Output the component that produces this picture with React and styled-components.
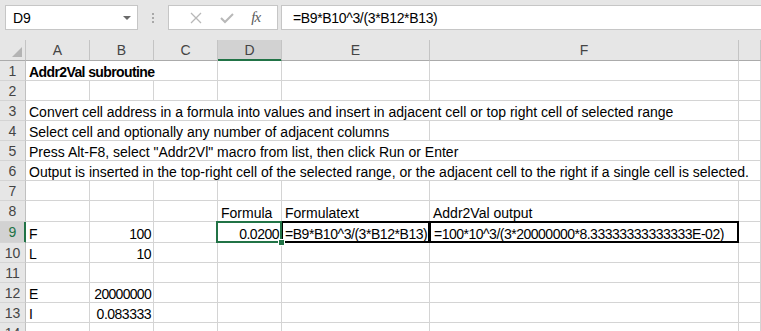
import React from 'react';
import styled, { createGlobalStyle } from 'styled-components';

const GREEN = '#217346';
const GRID = '#d4d4d4';
const TEMPLATE = '26px 64px 64px 64px 64px 148px 309px 1fr';

const GlobalStyle = createGlobalStyle`
  html, body { margin: 0; padding: 0; background: #fff; }
  body {
    font-family: "Liberation Sans", Arial, sans-serif;
    font-size: 14px;
    color: #000;
    overflow: hidden;
  }
  * { box-sizing: border-box; }
`;

const Page = styled.div`
  width: 761px;
  height: 331px;
  overflow: hidden;
`;

/* formula bar */
const TopBar = styled.div`
  height: 40px;
  background: #e6e6e6;
  display: flex;
  align-items: flex-start;
  padding: 5px 0 0 5px;
`;

const BarBox = styled.div`
  height: 25px;
  background: #fff;
  border: 1px solid #c6c6c6;
  display: flex;
  align-items: flex-end;
  padding-bottom: 3px;
  line-height: 16px;
  white-space: nowrap;
`;

const NameBox = styled(BarBox)`
  width: 133px;
  padding-left: 7px;
  justify-content: space-between;
  padding-right: 6px;
`;

const Arrow = styled.span`
  width: 0;
  height: 0;
  border-left: 4px solid transparent;
  border-right: 4px solid transparent;
  border-top: 4px solid #6a6a6a;
  margin-bottom: 6px;
`;

const Grip = styled.div`
  width: 30px;
  height: 25px;
  display: flex;
  flex-direction: column;
  align-items: center;
  justify-content: center;
  gap: 2px;
  span {
    width: 2px;
    height: 2px;
    background: #a8a8a8;
  }
`;

const FuncBox = styled(BarBox)`
  width: 110px;
  align-items: center;
  justify-content: space-around;
  padding: 0 8px 0 12px;
`;

const Fx = styled.span`
  font-family: "Liberation Serif", "Times New Roman", serif;
  font-style: italic;
  font-size: 15px;
  color: #5a5a5a;
  letter-spacing: -1px;
  margin-top: -2px;
`;

const FormulaBox = styled(BarBox)`
  flex: 1;
  margin-left: 3px;
  border-right: none;
  padding-left: 11px;
  letter-spacing: -0.35px;
`;

/* sheet */
const Row = styled.div`
  display: grid;
  grid-template-columns: ${TEMPLATE};
  height: ${p => p.$h}px;
`;

const ColHead = styled.div`
  background: ${p => (p.$active ? '#d2d2d2' : '#e6e6e6')};
  border-right: 1px solid #c4c4c4;
  border-bottom: 1px solid ${p => (p.$active ? GREEN : '#ababab')};
  box-shadow: ${p => (p.$active ? `inset 0 -1px 0 ${GREEN}` : 'none')};
  color: #444;
  display: flex;
  align-items: center;
  justify-content: center;
  line-height: 16px;
  position: relative;
`;

const Corner = styled(ColHead)`
  &::after {
    content: '';
    position: absolute;
    right: 3px;
    bottom: 3px;
    width: 0;
    height: 0;
    border-left: 10px solid transparent;
    border-bottom: 10px solid #b4b4b4;
  }
`;

const RowHead = styled.div`
  background: ${p => (p.$active ? '#d2d2d2' : '#e6e6e6')};
  border-right: 1px solid ${p => (p.$active ? GREEN : '#c0c0c0')};
  border-bottom: 1px solid #d4d4d4;
  box-shadow: ${p => (p.$active ? `inset -1px 0 0 ${GREEN}` : 'none')};
  color: ${p => (p.$active ? GREEN : '#444')};
  display: flex;
  align-items: center;
  justify-content: center;
  line-height: 16px;
`;

const Cell = styled.div`
  grid-column: span ${p => p.$span || 1};
  border-right: 1px solid ${GRID};
  border-bottom: 1px solid ${GRID};
  display: flex;
  align-items: flex-end;
  min-width: 0;
  position: relative;
  line-height: 16px;

  ${p =>
    p.$boxed &&
    `&::after {
      content: '';
      position: absolute;
      inset: -1px;
      border: 2px solid #000;
      z-index: 1;
    }`}

  ${p =>
    p.$selected &&
    `&::before {
      content: '';
      position: absolute;
      top: -1px;
      left: -2px;
      right: -1px;
      bottom: -1px;
      border: 2px solid ${GREEN};
      z-index: 2;
    }`}
`;

const CellText = styled.span`
  flex: 1;
  min-width: 0;
  overflow: hidden;
  white-space: nowrap;
  text-align: ${p => (p.$right ? 'right' : 'left')};
  padding: 0 ${p => (p.$right ? 2 : 3)}px 0 ${p => (p.$boxed ? 4 : 3)}px;
  font-weight: ${p => (p.$bold ? 700 : 400)};
  letter-spacing: ${p => p.$tight || 0}px;
`;

const Handle = styled.span`
  position: absolute;
  right: -4px;
  bottom: -4px;
  width: 7px;
  height: 7px;
  background: ${GREEN};
  border: 1px solid #fff;
  z-index: 3;
`;

const COLS = ['A', 'B', 'C', 'D', 'E', 'F', ''];

const ROWS = [
  { n: 1, cells: [{ col: 0, span: 3, text: 'Addr2Val subroutine', bold: true, tight: -0.6 }] },
  { n: 2 },
  { n: 3, cells: [{ col: 0, span: 6, text: 'Convert cell address in a formula into values and insert in adjacent cell or top right cell of selected range' }] },
  { n: 4, cells: [{ col: 0, span: 5, text: 'Select cell and optionally any number of adjacent columns' }] },
  { n: 5, cells: [{ col: 0, span: 6, text: 'Press Alt-F8, select "Addr2Vl" macro from list, then click Run or Enter' }] },
  { n: 6, cells: [{ col: 0, span: 7, text: 'Output is inserted in the top-right cell of the selected range, or the adjacent cell to the right if a single cell is selected.' }] },
  { n: 7 },
  {
    n: 8,
    h: 21,
    cells: [
      { col: 3, text: 'Formula' },
      { col: 4, text: 'Formulatext' },
      { col: 5, text: 'Addr2Val output' },
    ],
  },
  {
    n: 9,
    h: 21,
    active: true,
    cells: [
      { col: 0, text: 'F' },
      { col: 1, text: '100', right: true, tight: -0.5 },
      { col: 3, text: '0.0200', right: true, selected: true, tight: -0.5 },
      { col: 4, text: '=B9*B10^3/(3*B12*B13)', boxed: true, tight: -0.45 },
      { col: 5, text: '=100*10^3/(3*20000000*8.33333333333333E-02)', boxed: true, tight: -0.5 },
    ],
  },
  { n: 10, cells: [{ col: 0, text: 'L' }, { col: 1, text: '10', right: true, tight: -0.5 }] },
  { n: 11 },
  { n: 12, cells: [{ col: 0, text: 'E' }, { col: 1, text: '20000000', right: true, tight: -0.7 }] },
  { n: 13, cells: [{ col: 0, text: 'I' }, { col: 1, text: '0.083333', right: true, tight: -0.5 }] },
  { n: 14 },
];

function rowCells(row) {
  const out = [];
  const cells = row.cells || [];
  let col = 0;
  while (col < COLS.length) {
    const c = cells.find(x => x.col === col);
    if (c) {
      out.push(c);
      col += c.span || 1;
    } else {
      out.push({ col });
      col += 1;
    }
  }
  return out;
}

const CrossIcon = () => (
  <svg width="12" height="12" viewBox="0 0 12 12">
    <path d="M1 1 L11 11 M11 1 L1 11" stroke="#b8b8b8" strokeWidth="1.3" fill="none" />
  </svg>
);

const CheckIcon = () => (
  <svg width="14" height="12" viewBox="0 0 14 12">
    <path d="M1 6 L5 10 L13 2" stroke="#b8b8b8" strokeWidth="2" fill="none" />
  </svg>
);

export default function App() {
  return (
    <Page>
      <GlobalStyle />
      <TopBar>
        <NameBox>
          <span>D9</span>
          <Arrow />
        </NameBox>
        <Grip>
          <span />
          <span />
          <span />
        </Grip>
        <FuncBox>
          <CrossIcon />
          <CheckIcon />
          <Fx>fx</Fx>
        </FuncBox>
        <FormulaBox>=B9*B10^3/(3*B12*B13)</FormulaBox>
      </TopBar>

      <Row $h={21}>
        <Corner />
        {COLS.map((c, i) => (
          <ColHead key={i} $active={c === 'D'}>
            {c}
          </ColHead>
        ))}
      </Row>

      {ROWS.map(row => (
        <Row key={row.n} $h={row.h || 20}>
          <RowHead $active={row.active}>{row.n}</RowHead>
          {rowCells(row).map(cell => (
            <Cell
              key={cell.col}
              $span={cell.span}
              $boxed={cell.boxed}
              $selected={cell.selected}
            >
              {cell.text && (
                <CellText
                  $right={cell.right}
                  $bold={cell.bold}
                  $boxed={cell.boxed && cell.col === 5}
                  $tight={cell.tight}
                >
                  {cell.text}
                </CellText>
              )}
              {cell.selected && <Handle />}
            </Cell>
          ))}
        </Row>
      ))}
    </Page>
  );
}
